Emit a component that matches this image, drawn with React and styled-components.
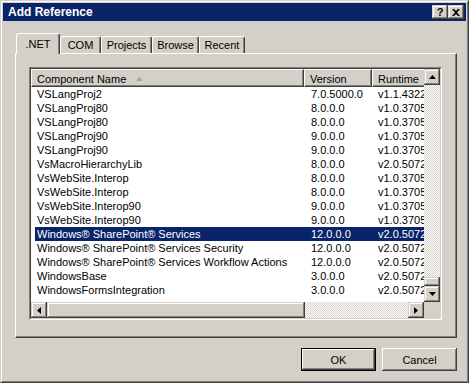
import styled, { createGlobalStyle } from "styled-components";

const GlobalStyle = createGlobalStyle`
  html, body {
    margin: 0;
    padding: 0;
    background: #ffffff;
  }
  body {
    font-family: "Liberation Sans", Arial, sans-serif;
    font-size: 11px;
    color: #000;
  }
`;

const face = "#d4d0c8";

const tabs = [
  { label: ".NET", width: 44, active: true },
  { label: "COM", width: 41 },
  { label: "Projects", width: 51 },
  { label: "Browse", width: 47 },
  { label: "Recent", width: 46 },
];

const columns = [
  { label: "Component Name", width: 273, sorted: true },
  { label: "Version", width: 68 },
  { label: "Runtime", width: 90 },
];

const rows = [
  ["VSLangProj2", "7.0.5000.0", "v1.1.4322"],
  ["VSLangProj80", "8.0.0.0", "v1.0.3705"],
  ["VSLangProj80", "8.0.0.0", "v1.0.3705"],
  ["VSLangProj90", "9.0.0.0", "v1.0.3705"],
  ["VSLangProj90", "9.0.0.0", "v1.0.3705"],
  ["VsMacroHierarchyLib", "8.0.0.0", "v2.0.50727"],
  ["VsWebSite.Interop", "8.0.0.0", "v1.0.3705"],
  ["VsWebSite.Interop", "8.0.0.0", "v1.0.3705"],
  ["VsWebSite.Interop90", "9.0.0.0", "v1.0.3705"],
  ["VsWebSite.Interop90", "9.0.0.0", "v1.0.3705"],
  ["Windows® SharePoint® Services", "12.0.0.0", "v2.0.50727"],
  ["Windows® SharePoint® Services Security", "12.0.0.0", "v2.0.50727"],
  ["Windows® SharePoint® Services Workflow Actions", "12.0.0.0", "v2.0.50727"],
  ["WindowsBase", "3.0.0.0", "v2.0.50727"],
  ["WindowsFormsIntegration", "3.0.0.0", "v2.0.50727"],
];

const selectedRow = 10;

// raised 3d edge used by buttons, thumbs, caption buttons
const raised = `
  box-shadow: inset -1px -1px #404040, inset 1px 1px ${face},
    inset -2px -2px #808080, inset 2px 2px #ffffff;
`;

export default function App() {
  return (
    <>
      <GlobalStyle />
      <Window>
        <Frame>
          <TitleBar>
            <TitleText>Add Reference</TitleText>
            <CaptionButton>
              <HelpGlyph>?</HelpGlyph>
            </CaptionButton>
            <CaptionButton>
              <svg width="8" height="7" viewBox="0 0 8 7">
                <path d="M0 0h2l2 2 2-2h2L5 3.5 8 7H6L4 5 2 7H0l3-3.5z" fill="#000" />
              </svg>
            </CaptionButton>
          </TitleBar>

          <Body>
            <TabRow>
              {tabs.map((t) => (
                <Tab key={t.label} $width={t.width} $active={t.active}>
                  {t.label}
                </Tab>
              ))}
            </TabRow>

            <Panel>
              <ListFrame>
                <ListInner>
                  <ListContent>
                    <Header>
                      {columns.map((c) => (
                        <HeaderCell key={c.label} $width={c.width}>
                          {c.label}
                          {c.sorted && (
                            <SortArrow width="7" height="4" viewBox="0 0 7 4">
                              <path d="M3.5 0L7 4H0z" fill="#a8a59e" />
                            </SortArrow>
                          )}
                        </HeaderCell>
                      ))}
                    </Header>
                    {rows.map((r, i) => (
                      <Row key={i} $selected={i === selectedRow}>
                        <Cell $width={269} $pad={2}>{r[0]}</Cell>
                        <Cell $width={68} $pad={7}>{r[1]}</Cell>
                        <Cell $width={90} $pad={6}>{r[2]}</Cell>
                      </Row>
                    ))}
                  </ListContent>

                  <VScroll>
                    <ArrowButton>
                      <svg width="7" height="4" viewBox="0 0 7 4">
                        <path d="M3.5 0L7 4H0z" fill="#000" />
                      </svg>
                    </ArrowButton>
                    <VTrack>
                      <VThumb />
                    </VTrack>
                    <ArrowButton>
                      <svg width="7" height="4" viewBox="0 0 7 4">
                        <path d="M0 0h7L3.5 4z" fill="#000" />
                      </svg>
                    </ArrowButton>
                  </VScroll>

                  <HScroll>
                    <ArrowButton>
                      <svg width="4" height="7" viewBox="0 0 4 7">
                        <path d="M4 0v7L0 3.5z" fill="#000" />
                      </svg>
                    </ArrowButton>
                    <HTrack>
                      <HThumb />
                    </HTrack>
                    <ArrowButton>
                      <svg width="4" height="7" viewBox="0 0 4 7">
                        <path d="M0 0v7L4 3.5z" fill="#000" />
                      </svg>
                    </ArrowButton>
                  </HScroll>

                  <Corner />
                </ListInner>
              </ListFrame>
            </Panel>

            <ButtonRow>
              <DialogButton $default>OK</DialogButton>
              <DialogButton>Cancel</DialogButton>
            </ButtonRow>
          </Body>
        </Frame>
      </Window>
    </>
  );
}

const Window = styled.div`
  width: 469px;
  height: 383px;
  box-sizing: border-box;
  background: ${face};
  border: 1px solid;
  border-color: ${face} #404040 #404040 ${face};
  display: flex;
  flex-direction: column;
`;

const Frame = styled.div`
  flex: 1;
  display: flex;
  flex-direction: column;
  border: 1px solid;
  border-color: #ffffff #808080 #808080 #ffffff;
  padding: 1px;
`;

const TitleBar = styled.div`
  height: 18px;
  background: #0a246a;
  display: flex;
  align-items: center;
  padding: 0 2px 0 5px;
`;

const TitleText = styled.div`
  flex: 1;
  color: #fff;
  font-weight: bold;
  font-size: 12px;
`;

const CaptionButton = styled.div`
  width: 16px;
  height: 14px;
  background: ${face};
  ${raised}
  display: flex;
  align-items: center;
  justify-content: center;
`;

const HelpGlyph = styled.span`
  font-weight: bold;
  font-size: 11px;
  line-height: 11px;
  margin-top: 1px;
`;

const Body = styled.div`
  flex: 1;
  padding: 12px 9px 0 12px;
  display: flex;
  flex-direction: column;
`;

const TabRow = styled.div`
  display: flex;
  align-items: flex-end;
  height: 20px;
  padding-left: 1px;
  position: relative;
  z-index: 1;
`;

const Tab = styled.div`
  width: ${(p) => p.$width}px;
  height: ${(p) => (p.$active ? 21 : 17)}px;
  margin-bottom: ${(p) => (p.$active ? -1 : 0)}px;
  box-sizing: border-box;
  background: ${face};
  border-top: 1px solid #fff;
  border-left: 1px solid #fff;
  border-right: 1px solid #404040;
  box-shadow: inset -1px 0 #808080;
  border-radius: 3px 3px 0 0;
  display: flex;
  align-items: center;
  justify-content: center;
`;

const Panel = styled.div`
  height: 285px;
  box-sizing: border-box;
  border: 1px solid;
  border-color: #fff #404040 #404040 #fff;
  box-shadow: inset -1px -1px #808080;
  padding: 13px 14px 17px 13px;
`;

const ListFrame = styled.div`
  height: 100%;
  box-sizing: border-box;
  border: 1px solid;
  border-color: #808080 #fff #fff #808080;
`;

const ListInner = styled.div`
  height: 100%;
  box-sizing: border-box;
  border: 1px solid;
  border-color: #404040 ${face} ${face} #404040;
  background: #fff;
  display: grid;
  grid-template-columns: 1fr 16px;
  grid-template-rows: 1fr 16px;
`;

const ListContent = styled.div`
  overflow: hidden;
  white-space: nowrap;
`;

const Header = styled.div`
  display: flex;
  height: 18px;
`;

const HeaderCell = styled.div`
  flex: none;
  width: ${(p) => p.$width}px;
  box-sizing: border-box;
  background: ${face};
  border: 1px solid;
  border-color: #fff #404040 #404040 #fff;
  box-shadow: inset -1px -1px #808080;
  padding: 1px 0 0 5px;
  display: flex;
  align-items: center;
`;

const SortArrow = styled.svg`
  margin-left: 10px;
`;

const Row = styled.div`
  display: flex;
  height: 14px;
  line-height: 14px;
  margin-left: 4px;
  background: ${(p) => (p.$selected ? "#0a246a" : "transparent")};
  color: ${(p) => (p.$selected ? "#fff" : "#000")};
`;

const Cell = styled.div`
  flex: none;
  width: ${(p) => p.$width}px;
  box-sizing: border-box;
  padding-left: ${(p) => p.$pad}px;
  overflow: hidden;
`;

const ArrowButton = styled.div`
  flex: none;
  width: 16px;
  height: 16px;
  box-sizing: border-box;
  background: ${face};
  ${raised}
  display: flex;
  align-items: center;
  justify-content: center;
`;

const dither = `
  background-color: #fff;
  background-image: repeating-conic-gradient(${face} 0 25%, #fff 0 50%);
  background-size: 2px 2px;
`;

const VScroll = styled.div`
  display: flex;
  flex-direction: column;
`;

const VTrack = styled.div`
  flex: 1;
  display: flex;
  flex-direction: column;
  justify-content: flex-end;
  ${dither}
`;

const VThumb = styled.div`
  height: 9px;
  background: ${face};
  ${raised}
`;

const HScroll = styled.div`
  display: flex;
`;

const HTrack = styled.div`
  flex: 1;
  display: flex;
  ${dither}
`;

const HThumb = styled.div`
  width: 258px;
  background: ${face};
  ${raised}
`;

const Corner = styled.div`
  background: ${face};
`;

const ButtonRow = styled.div`
  display: flex;
  justify-content: flex-end;
  gap: 6px;
  margin-top: 10px;
`;

const DialogButton = styled.div`
  width: 75px;
  height: 23px;
  box-sizing: border-box;
  background: ${face};
  display: flex;
  align-items: center;
  justify-content: center;
  border: ${(p) => (p.$default ? "1px solid #000" : "none")};
  box-shadow: ${(p) =>
    p.$default
      ? "inset -1px -1px #404040, inset 1px 1px #fff, inset -2px -2px #808080"
      : `inset -1px -1px #404040, inset 1px 1px #fff, inset -2px -2px #808080, inset 2px 2px ${face}`};
`;
